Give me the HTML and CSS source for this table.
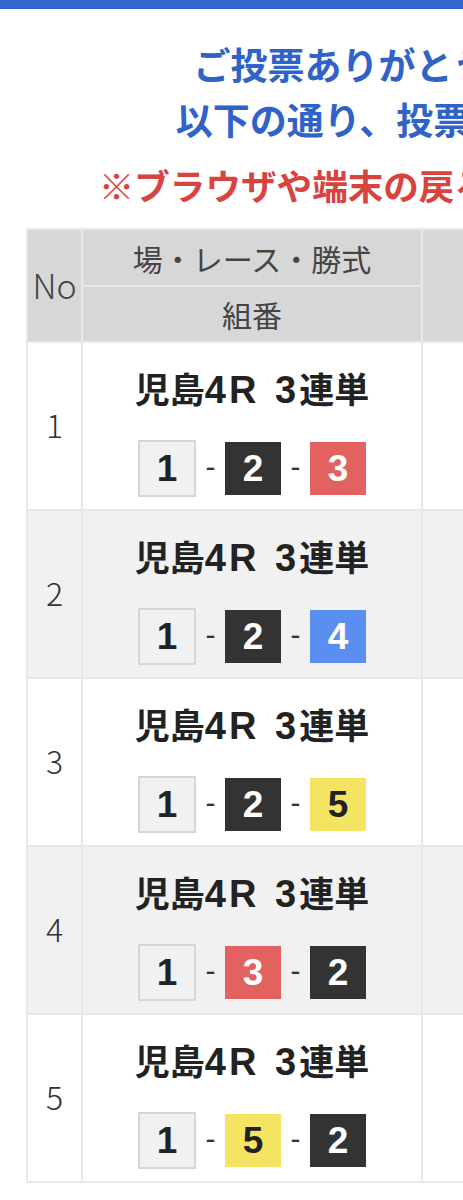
FILE: index.html
```html
<!DOCTYPE html>
<html lang="ja">
<head>
<meta charset="utf-8">
<title>投票完了</title>
<link rel="stylesheet" href="styles.css">
</head>
<body>
<div class="page">
  <div class="topbar"></div>
  <h1 class="thanks">
    <span class="line">ご投票ありがとうございました。</span>
    <span class="line">以下の通り、投票を受付けました。</span>
  </h1>
  <p class="warning">※ブラウザや端末の戻るボタンは押さないで。</p>

  <div class="bets">
    <div class="hcell hno">No</div>
    <div class="hcell">場・レース・勝式</div>
    <div class="hcell hrest"></div>
    <div class="hcell">組番</div>

    <div class="cell no">1</div>
    <div class="cell bet">
      <div class="race">児島<span class="lat">4R 3</span>連単</div>
      <div class="combo"><span class="num n1">1</span><span class="dash">-</span><span class="num n2">2</span><span class="dash">-</span><span class="num n3">3</span></div>
    </div>
    <div class="cell rest"></div>

    <div class="cell no alt">2</div>
    <div class="cell bet alt">
      <div class="race">児島<span class="lat">4R 3</span>連単</div>
      <div class="combo"><span class="num n1">1</span><span class="dash">-</span><span class="num n2">2</span><span class="dash">-</span><span class="num n4">4</span></div>
    </div>
    <div class="cell rest alt"></div>

    <div class="cell no">3</div>
    <div class="cell bet">
      <div class="race">児島<span class="lat">4R 3</span>連単</div>
      <div class="combo"><span class="num n1">1</span><span class="dash">-</span><span class="num n2">2</span><span class="dash">-</span><span class="num n5">5</span></div>
    </div>
    <div class="cell rest"></div>

    <div class="cell no alt">4</div>
    <div class="cell bet alt">
      <div class="race">児島<span class="lat">4R 3</span>連単</div>
      <div class="combo"><span class="num n1">1</span><span class="dash">-</span><span class="num n3">3</span><span class="dash">-</span><span class="num n2">2</span></div>
    </div>
    <div class="cell rest alt"></div>

    <div class="cell no">5</div>
    <div class="cell bet">
      <div class="race">児島<span class="lat">4R 3</span>連単</div>
      <div class="combo"><span class="num n1">1</span><span class="dash">-</span><span class="num n5">5</span><span class="dash">-</span><span class="num n2">2</span></div>
    </div>
    <div class="cell rest"></div>
  </div>
</div>
</body>
</html>
```

FILE: styles.css
```css
html {
  overflow: hidden;
}
body {
  margin: 0;
  background: #fff;
  font-family: "Noto Sans CJK JP", "Noto Sans", sans-serif;
  color: #333;
}
.page {
  width: 942px;
}
.topbar {
  height: 9px;
  background: #3265d0;
}
.thanks {
  margin: 28px 0 0;
  font-size: 37px;
  line-height: 55px;
  font-weight: 700;
  color: #2f63c9;
  text-align: center;
  white-space: nowrap;
}
.thanks .line {
  display: block;
}
.warning {
  margin: 16px 0 0;
  font-size: 35.6px;
  line-height: 44px;
  font-weight: 700;
  color: #d8433d;
  text-align: center;
  white-space: nowrap;
}
.bets {
  margin: 21px 26px 0;
  display: grid;
  grid-template-columns: 53px 338px 1fr;
  grid-template-rows: 55px 54px;
  grid-auto-rows: 166px;
  gap: 2px;
  padding: 2px;
  background: #e8e8e8;
}
.hcell {
  background: #d7d7d7;
  display: flex;
  align-items: center;
  justify-content: center;
  font-size: 30px;
  color: #444;
  white-space: nowrap;
}
.hno {
  grid-row: span 2;
  font-weight: 300;
  font-size: 34px;
  padding-bottom: 2px;
}
.hrest {
  grid-row: span 2;
}
.cell {
  background: #fff;
}
.cell.alt {
  background: #f1f1f1;
}
.no {
  display: flex;
  align-items: center;
  justify-content: center;
  font-size: 32px;
  font-weight: 300;
  color: #333;
  padding-bottom: 4px;
}
.bet {
  display: flex;
  flex-direction: column;
  align-items: center;
  padding-top: 25px;
  box-sizing: border-box;
}
.race {
  font-size: 35px;
  line-height: 40px;
  height: 40px;
  font-weight: 700;
  color: #222;
  white-space: nowrap;
}
.lat {
  font-family: "Liberation Sans", Arial, sans-serif;
  font-size: 38px;
  letter-spacing: 3px;
  word-spacing: 2px;
}
.combo {
  margin-top: 32px;
  display: flex;
  align-items: center;
  height: 57px;
}
.num {
  width: 56px;
  height: 53px;
  display: flex;
  align-items: center;
  justify-content: center;
  font-family: "Liberation Sans", Arial, sans-serif;
  font-weight: 700;
  font-size: 37px;
}
.dash {
  width: 29px;
  text-align: center;
  font-family: "Liberation Sans", Arial, sans-serif;
  font-size: 30px;
  color: #333;
  line-height: 1;
  padding-bottom: 4px;
}
.n1 {
  width: 54px;
  border: 2px solid #d6d6d6;
  background: #f1f1f1;
  color: #222;
}
.n2 {
  background: #333;
  color: #fff;
}
.n3 {
  background: #e1625f;
  color: #fff;
}
.n4 {
  background: #5a8ef0;
  color: #fff;
}
.n5 {
  background: #f5e462;
  color: #222;
}
```
